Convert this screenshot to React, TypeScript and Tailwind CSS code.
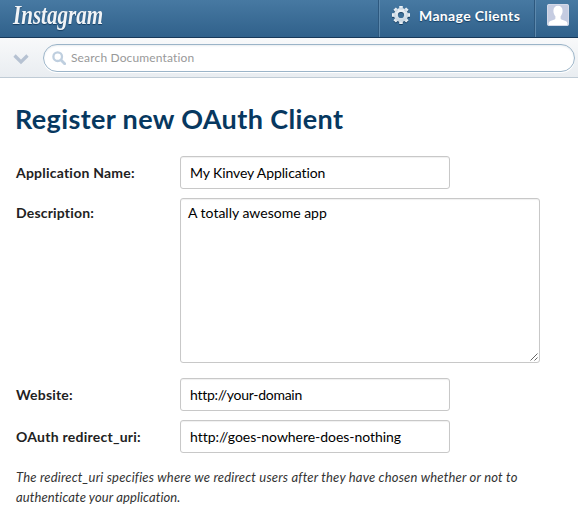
import React from "react";

function Gear() {
  return (
    <svg className="h-[20px] w-[20px] shrink-0 drop-shadow-[0_1px_0_#173f63]" viewBox="0 0 20 20">
      <defs>
        <linearGradient id="gear" x1="0" y1="0" x2="0" y2="1">
          <stop offset="0" stopColor="#f4f7fa" />
          <stop offset="1" stopColor="#c3d2df" />
        </linearGradient>
        <mask id="hub">
          <rect width="20" height="20" fill="white" />
          <circle cx="10" cy="10" r="3.1" fill="black" />
        </mask>
      </defs>
      <g fill="url(#gear)" mask="url(#hub)">
        <circle cx="10" cy="10" r="7" />
        {[0, 45, 90, 135, 180, 225, 270, 315].map((a) => (
          <path key={a} d="M8 4.5 8.3 1h3.400l.3 3.500z" transform={`rotate(${a} 10 10)`} />
        ))}
      </g>
    </svg>
  );
}

function Avatar() {
  return (
    <svg className="h-[22px] w-[22px] rounded-[2px]" viewBox="0 0 22 22">
      <rect width="22" height="22" fill="#c5cce1" />
      <path
        d="M11 1.8c2.9 0 4.6 2 4.6 5 0 2.300-.8 4.200-2 5.400v2c0 .8.5 1.100 1.500 1.500l3.400 1.300c1.400.6 2 1.500 2 2.800V21H1.500v-1.200c0-1.300.6-2.200 2-2.800l3.400-1.300c1-.4 1.500-.7 1.500-1.500v-2c-1.200-1.200-2-3.100-2-5.400 0-3 1.700-5 4.600-5z"
        fill="#fff"
      />
      <rect x=".5" y=".5" width="21" height="21" rx="1.500" fill="none" stroke="#d3d9e8" />
    </svg>
  );
}

const field =
  "block h-[33px] w-[270px] rounded-[3px] border border-[#c8c8c8] bg-white px-[9px] text-[14px] text-black shadow-[inset_0_1px_1px_#f0f0f0] outline-none";

function Label({ children, className }: { children: React.ReactNode; className: string }) {
  return (
    <span
      className={`w-[164px] shrink-0 text-[14px] leading-[18px] font-bold text-[#222] ${className}`}
    >
      {children}
    </span>
  );
}

export default function App() {
  return (
    <div className="h-[523px] w-[578px] overflow-hidden bg-white font-['Lato',sans-serif] [font-variant-ligatures:none]">
      <header className="flex h-[38px] border-b border-[#17395a] bg-linear-to-b from-[#4779a2] to-[#30618b]">
        <div className="w-[379px] pl-[13px]">
          <span className="block w-[90px] origin-left scale-x-[0.78] font-['Liberation_Serif',serif] text-[27px] leading-[30px] font-bold italic text-[#f1f4f7] [text-shadow:0_1px_1px_#173f63]">
            Instagram
          </span>
        </div>
        <div className="flex w-[156px] border-l border-[#5d89ad] pt-[5px] pl-[11px] shadow-[-1px_0_0_#2d587e]">
          <Gear />
          <span className="pl-[8px] text-[14px] leading-[21px] font-bold tracking-[0.35px] whitespace-nowrap text-white [text-shadow:0_1px_1px_#173f63]">
            Manage Clients
          </span>
        </div>
        <div className="grow border-l border-[#5d89ad] pt-[4px] pl-[11px] shadow-[-1px_0_0_#2d587e]">
          <Avatar />
        </div>
      </header>

      <div className="flex h-[40px] items-start border-b border-[#bfcbd5] bg-linear-to-b from-[#f8f9fa] to-[#e9edf1] pt-[6px]">
        <svg className="mt-[9px] ml-[13px] h-[12px] w-[16px]" viewBox="0 0 16 12">
          <path d="M1.500 2.500 8 9 14.500 2.500" fill="none" stroke="#b6c2d2" strokeWidth="3.200" />
        </svg>
        <div className="ml-[14px] flex h-[28px] w-[532px] items-center rounded-full border border-[#9bb4c8] bg-white pl-[8px] shadow-[inset_0_1px_2px_#e8ecef,0_1px_0_#fff]">
          <svg className="h-[14px] w-[14px]" viewBox="0 0 14 14" fill="none" stroke="#bfcfdf">
            <circle cx="5.700" cy="5.700" r="4.300" strokeWidth="2.300" />
            <path d="m9 9 3.700 3.700" strokeWidth="2.800" strokeLinecap="round" />
          </svg>
          <span className="pl-[5px] text-[12px] leading-[16px] tracking-[0.15px] text-[#999]">Search Documentation</span>
        </div>
      </div>

      <main className="pt-[22px] pl-[16px]">
        <h1 className="-ml-px h-[56px] text-[27px] leading-[38px] font-bold tracking-[0.37px] whitespace-nowrap text-[#073860]">
          Register new OAuth Client
        </h1>
        <div className="flex flex-col">
          <div className="flex h-[42px]">
            <Label className="pt-[8px] tracking-[0.22px]">Application Name:</Label>
            <input className={`${field} tracking-[-0.1px]`} defaultValue="My Kinvey Application" />
          </div>
          <div className="flex h-[180px]">
            <Label className="pt-[6px] tracking-[0.18px]">Description:</Label>
            <div className="relative h-[165px] w-[360px]">
              <textarea
                className="block h-full w-full resize-none rounded-[3px] border border-[#c8c8c8] px-[7px] py-[4px] text-[14px] leading-[20px] text-black shadow-[inset_0_1px_1px_#f0f0f0] outline-none"
                defaultValue="A totally awesome app"
              />
              <svg className="absolute right-[2px] bottom-[2px] h-[8px] w-[8px]" viewBox="0 0 8 8">
                <path d="m.5 7.500 7-7m-3 7 3-3" stroke="#555" strokeWidth=".9" />
              </svg>
            </div>
          </div>
          <div className="flex h-[42px]">
            <Label className="pt-[8px] tracking-[0.2px]">Website:</Label>
            <input className={`${field} tracking-[-0.27px]`} defaultValue="http://your-domain" />
          </div>
          <div className="flex h-[47px]">
            <Label className="pt-[8px] tracking-[0.25px]">OAuth redirect_uri:</Label>
            <input className={`${field} tracking-[-0.04px]`} defaultValue="http://goes-nowhere-does-nothing" />
          </div>
        </div>
        <p className="text-[13px] leading-[20px] tracking-[0.19px] text-[#333] italic">
          <span className="block whitespace-nowrap">
            The redirect_uri specifies where we redirect users after they have chosen whether or not to
          </span>
          <span className="block tracking-[0.1px]">authenticate your application.</span>
        </p>
      </main>
    </div>
  );
}
